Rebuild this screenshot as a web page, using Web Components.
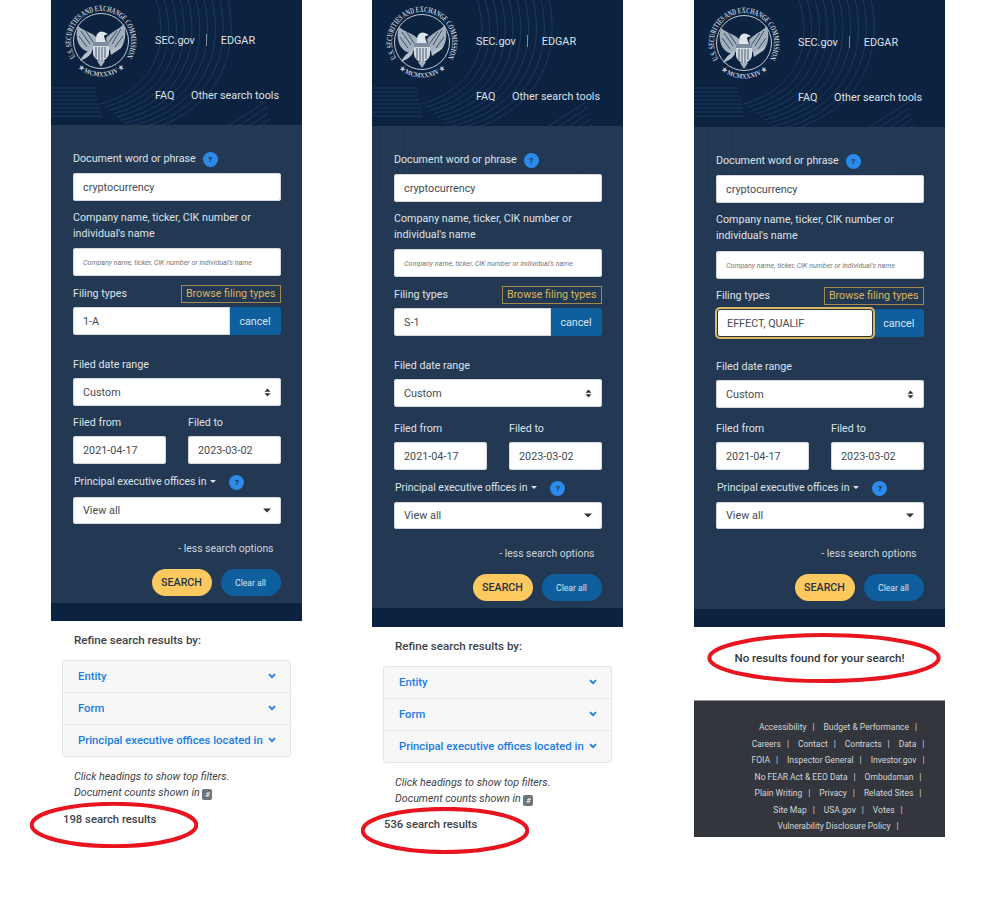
<!DOCTYPE html>
<html>
<head>
<meta charset="utf-8">
<title>EDGAR full text search</title>
<style>
    html, body { margin: 0; padding: 0; background: #fff; }
    body { font-family: Roboto, "Liberation Sans", sans-serif; }
</style>
</head>
<body>
<sec-page>
    <search-panel filing="1-A" style="--head:125px;--pad:1px;--form:478px;--gap-from:9px;--gap-co:6px;--gap-row:9px;--gap-sel:7px;--gap-btn:12px;--band:18px">
        <refine-box style="--top:10px;--gap-count:11px"></refine-box>
    </search-panel>
    <search-panel filing="S-1" style="--head:126px;--pad:2px;--form:482px;--gap-from:14px;--gap-co:6px;--gap-row:9px;--gap-sel:6px;--gap-btn:12px;--band:19px">
        <refine-box count="536" style="--top:10px;--gap-count:10px"></refine-box>
    </search-panel>
    <search-panel filing="EFFECT, QUALIF" focused style="margin-left:1px;--head:127px;--pad:3px;--form:482px;--gap-from:13px;--gap-co:7px;--gap-row:8px;--gap-sel:6px;--gap-btn:12px;--band:18px">
        <no-results></no-results>
        <sec-footer></sec-footer>
    </search-panel>
    <red-ring style="left:30px;top:802px;width:168px;height:46px"></red-ring>
    <red-ring style="left:361px;top:807px;width:168px;height:47px"></red-ring>
    <red-ring style="left:707px;top:633px;width:234px;height:50px"></red-ring>
</sec-page>

<script>
class SecPage extends HTMLElement {
    constructor() {
        super();
        this.attachShadow({ mode: 'open' });
        this.shadowRoot.innerHTML = `
            <style>
                :host {
                    display: flex;
                    position: relative;
                    gap: 70px;
                    padding-left: 51px;
                    height: 908px;
                    overflow: hidden;
                    background: #fff;
                }
            </style>
            <slot></slot>
        `;
    }
}

class SecSeal extends HTMLElement {
    constructor() {
        super();
        this.attachShadow({ mode: 'open' });
        // Text runs on circles, the bird is only a rough sketch
        this.shadowRoot.innerHTML = `
            <style>
                :host { display: block; width: 76px; height: 78px; }
                svg { display: block; }
                text { font-family: "Liberation Serif", serif; font-weight: 700; fill: #c3ccd6; }
            </style>
            <svg width="76" height="78" viewBox="0 0 76 78">
                <defs>
                    <path id="top" d="M12.600 55.900 A30 30 0 1 1 63.400 55.900"/>
                    <path id="bot" d="M10.800 62.800 A35.500 35.500 0 0 0 65.200 62.800"/>
                </defs>
                <circle cx="38" cy="40" r="27.500" fill="none" stroke="#c3ccd6" stroke-width="1"/>
                <text font-size="8.200"><textPath href="#top" textLength="127" lengthAdjust="spacingAndGlyphs">U.S. SECURITIES AND EXCHANGE COMMISSION</textPath></text>
                <text font-size="7"><textPath href="#bot" startOffset="6" textLength="50" lengthAdjust="spacingAndGlyphs">★ MCMXXXIV ★</textPath></text>
                <path d="M34 37C29 31 21 30 15 25C13 31 13 39 17 45C21 51 27 52 31 48Z" fill="#a3afbc"/>
                <path d="M43 37C48 31 55 29 61 23C63 31 63 39 59 45C55 51 49 52 45 48Z" fill="#a3afbc"/>
                <path d="M18 30L27 43M16 35L24 46M22 29L30 41M58 28L49 43M60 35L52 46M54 30L46 41" stroke="#2c4460" stroke-width=".9" fill="none"/>
                <path d="M33 38C33 32 37 29 41 31L45 33L41 34.500C41 36 42 38 43 41L33 41Z" fill="#dfe4e9"/>
                <path d="M30 41L46 41L46 52C46 57 41 59 38 62C35 59 30 57 30 52Z" fill="#d3d9e0"/>
                <path d="M30 41H46V45H30Z" fill="#7f8fa1"/>
                <path d="M33 46V57M36 46V60M39 46V60M42 46V57" stroke="#475c74" stroke-width="1"/>
                <path d="M29 51C25 57 21 58 17 60C19 55 23 51 28 48Z" fill="#b6c0ca"/>
                <path d="M47 50L60 43L58 47L48 54Z" fill="#b6c0ca"/>
                <path d="M34 60L38 66L42 60Z" fill="#a3afbc"/>
            </svg>
        `;
    }
}

class SecHelp extends HTMLElement {
    constructor() {
        super();
        this.attachShadow({ mode: 'open' });
        this.shadowRoot.innerHTML = `
            <style>
                :host {
                    display: inline-flex;
                    width: 15px;
                    height: 15px;
                    border-radius: 50%;
                    background: #2b8aea;
                    color: #17304f;
                    font-size: 8px;
                    font-weight: 700;
                    align-items: center;
                    justify-content: center;
                }
            </style>
            ?
        `;
    }
}

class SecField extends HTMLElement {
    constructor() {
        super();
        this.attachShadow({ mode: 'open' });
        const arrow = this.getAttribute('arrow');
        let icon = '';
        if (arrow === 'both') {
            icon = '<svg width="7" height="9" viewBox="0 0 7 9"><path d="M.5 3.700L3.500 .5L6.500 3.700ZM.5 5.300L3.500 8.500L6.500 5.300Z" fill="#333"/></svg>';
        } else if (arrow === 'down') {
            icon = '<svg width="8" height="5" viewBox="0 0 8 5"><path d="M0 .5H8L4 4.500Z" fill="#333"/></svg>';
        }
        this.shadowRoot.innerHTML = `
            <style>
                :host {
                    display: flex;
                    align-items: center;
                    justify-content: space-between;
                    box-sizing: border-box;
                    height: var(--h, 28px);
                    padding: 0 10px;
                    background: #fff;
                    border-radius: 3px;
                    box-shadow: inset 0 0 0 1px #d5d9de;
                    color: #444b52;
                    font-size: 10.8px;
                }
            </style>
            <span><slot></slot></span>${icon}
        `;
    }
}

class SearchPanel extends HTMLElement {
    constructor() {
        super();
        this.attachShadow({ mode: 'open' });
    }

    connectedCallback() {
        const filing = this.getAttribute('filing');
        const focused = this.hasAttribute('focused');

        // Faint eagle behind the header and the top of the form
        let feathers = '';
        for (let i = 0; i < 10; i++) {
            const d = i * 8;
            feathers += `<path d="M${104 + d} -4C${120 + d} ${44 + d * .2} ${104 + d * .8} ${88 + d * .4} ${50 + d * .5} ${104 + d * .4}"/>`;
            feathers += `<path d="M${214 + d * .2} ${102 + d * .7}L${140 + d * .6} ${150 + d * .5}"/>`;
        }
        for (let i = 0; i < 8; i++) {
            feathers += `<path d="M0 ${88 + i * 4}H${44 + i}"/>`;
            feathers += `<path d="M${5 + i * 6} 128V192"/>`;
        }

        this.shadowRoot.innerHTML = `
            <style>
                :host {
                    display: block;
                    position: relative;
                    flex: none;
                    width: 251px;
                    font-size: 10.7px;
                    color: #dfe3e8;
                }
                .mark {
                    position: absolute;
                    left: 0;
                    top: 0;
                }
                .mark path { fill: none; stroke: #1c3a5e; stroke-width: 1; }
                .top {
                    position: relative;
                    background: #0b2240;
                    padding-bottom: var(--band);
                }
                header {
                    position: relative;
                    box-sizing: border-box;
                    height: var(--head);
                    display: grid;
                    grid-template-columns: 92px 1fr;
                    padding: var(--pad) 23px 0 12px;
                }
                nav {
                    display: flex;
                    flex-direction: column;
                    gap: 39px;
                    padding-top: 31px;
                    font-size: 10.8px;
                }
                nav div { display: flex; height: 16px; align-items: center; }
                nav .two { justify-content: space-between; }
                nav i { width: 1px; height: 12px; background: #7c8b9d; margin: 0 14px 0 11px; }
                .form {
                    position: relative;
                    box-sizing: border-box;
                    height: var(--form);
                    padding: 26px 21.500px 0 22px;
                    background: rgba(41, 63, 87, .8);
                }
                label, .label { display: block; line-height: 16px; }
                .gap6 { margin-top: 6px; }
                .gap5 { margin-top: 5px; }
                .row { display: flex; align-items: center; justify-content: space-between; }
                .docrow { justify-content: flex-start; gap: 7px; }
                .browse {
                    box-sizing: border-box;
                    height: 18px;
                    line-height: 16px;
                    padding: 0 4px;
                    border: 1px solid #a38b47;
                    color: #d9b65c;
                }
                .filing { display: flex; margin-top: 4px; --h: 28px; }
                .filing sec-field { flex: 1; border-radius: 3px 0 0 3px; }
                .cancel {
                    width: 51px;
                    display: flex;
                    align-items: center;
                    justify-content: center;
                    background: #0f5f9f;
                    color: #d8e3ee;
                    border-radius: 0 3px 3px 0;
                }
                .focus sec-field {
                    flex: none;
                    width: 156px;
                    margin: 0 1px;
                    border-radius: 3px;
                    position: relative;
                    box-shadow: inset 0 0 0 1px #333, 0 0 0 2px #d8b865;
                }
                .focus .cancel { width: 49.500px; border-radius: 3px; }
                .dates { display: grid; grid-template-columns: 92.500px 92.500px; justify-content: space-between; margin-top: var(--gap-from); }
                .po { gap: 13px; justify-content: flex-start; margin-top: 10px; padding-left: 1px; font-size: 10.5px; }
                .caret { display: inline-block; margin-left: 4px; vertical-align: 2px; border: 3.500px solid transparent; border-top-color: #dfe3e8; border-bottom: 0; }
                .less { text-align: right; padding-right: 7px; line-height: 16px; margin-top: 17px; color: #cfd5dc; font-size: 10.4px; }
                .btns { display: flex; justify-content: flex-end; gap: 9px; margin-top: var(--gap-btn); }
                .btn {
                    height: 27px;
                    display: flex;
                    align-items: center;
                    justify-content: center;
                    border-radius: 14px;
                }
                .search { width: 60px; background: #fdc95f; color: #243447; font-weight: 500; }
                .clear { width: 60px; background: #0f5f9f; color: #d8e3ee; font-size: 8.6px; }
            </style>
            <div class="top">
                <svg class="mark" width="251" height="230" viewBox="0 0 251 230">${feathers}</svg>
                <header>
                    <sec-seal></sec-seal>
                    <nav>
                        <div><span>SEC.gov</span><i></i><span>EDGAR</span></div>
                        <div class="two"><span>FAQ</span><span>Other search tools</span></div>
                    </nav>
                </header>
                <div class="form">
                    <div class="row docrow"><span class="label">Document word or phrase</span><sec-help></sec-help></div>
                    <sec-field class="gap6">cryptocurrency</sec-field>
                    <label style="margin-top:9px">Company name, ticker, CIK number or<br>individual's name</label>
                    <sec-field style="margin-top:var(--gap-co);font-size:7.100px;font-style:italic;color:#777">Company name, ticker, CIK number or individual's name</sec-field>
                    <div class="row" style="margin-top:var(--gap-row)"><span class="label">Filing types</span><span class="browse">Browse filing types</span></div>
                    <div class="filing ${focused ? 'focus' : ''}">
                        <sec-field>${filing}</sec-field>
                        <div class="cancel">cancel</div>
                    </div>
                    <label style="margin-top:22px">Filed date range</label>
                    <sec-field class="gap5" arrow="both">Custom</sec-field>
                    <div class="dates">
                        <label>Filed from</label><label>Filed to</label>
                        <sec-field class="gap5">2021-04-17</sec-field><sec-field class="gap5">2023-03-02</sec-field>
                    </div>
                    <div class="row po"><span class="label">Principal executive offices in<span class="caret"></span></span><sec-help></sec-help></div>
                    <sec-field arrow="down" style="--h:27px;margin-top:var(--gap-sel)">View all</sec-field>
                    <div class="less">- less search options</div>
                    <div class="btns">
                        <div class="btn search">SEARCH</div>
                        <div class="btn clear">Clear all</div>
                    </div>
                </div>
            </div>
            <slot></slot>
        `;
    }
}

class RefineBox extends HTMLElement {
    constructor() {
        super();
        this.attachShadow({ mode: 'open' });
    }

    connectedCallback() {
        const count = this.getAttribute('count') || '198';
        const rows = ['Entity', 'Form', 'Principal executive offices located in'].map((name) => `
            <div class="item"><span>${name}</span>
                <svg width="8" height="6" viewBox="0 0 8 6"><path d="M1 1.200L4 4.200L7 1.200" fill="none" stroke="#1a7de0" stroke-width="1.800"/></svg>
            </div>
        `).join('');

        this.shadowRoot.innerHTML = `
            <style>
                :host { display: block; padding-top: var(--top); font-size: 11.3px; color: #3c4248; }
                .title { padding-left: 23px; font-weight: 500; line-height: 18px; font-size: 11.600px; }
                .acc {
                    margin: 11px 11px 0;
                    border: 1px solid #e4e5e7;
                    border-radius: 3px;
                    background: #f7f7f7;
                }
                .item {
                    display: flex;
                    align-items: center;
                    justify-content: space-between;
                    box-sizing: border-box;
                    height: 31px;
                    padding: 0 14px 0 15px;
                    color: #1a7de0;
                    font-weight: 500;
                }
                .item svg { margin-bottom: 2px; }
                .item + .item { border-top: 1px solid #e8e8e9; height: 32px; }
                .hint { margin: 12px 0 0 23px; font-style: italic; line-height: 16px; font-size: 10.700px; }
                .num {
                    display: inline-block;
                    width: 10px;
                    height: 11px;
                    line-height: 11px;
                    text-align: center;
                    font-size: 8px;
                    color: #fff;
                    background: #6c757d;
                    border-radius: 2px;
                    vertical-align: -1px;
                }
                .count { margin: var(--gap-count) 0 0 12px; font-weight: 500; line-height: 16px; }
            </style>
            <div class="title">Refine search results by:</div>
            <div class="acc">${rows}</div>
            <div class="hint">Click headings to show top filters.<br>Document counts shown in <span class="num">#</span></div>
            <div class="count">${count} search results</div>
        `;
    }
}

class NoResults extends HTMLElement {
    constructor() {
        super();
        this.attachShadow({ mode: 'open' });
        this.shadowRoot.innerHTML = `
            <style>
                :host {
                    display: block;
                    height: 73px;
                    padding-top: 22px;
                    box-sizing: border-box;
                    text-align: center;
                    font-size: 11.600px;
                    font-weight: 500;
                    line-height: 18px;
                    color: #33383e;
                }
            </style>
            No results found for your search!
        `;
    }
}

class SecFooter extends HTMLElement {
    constructor() {
        super();
        this.attachShadow({ mode: 'open' });
        const lines = [
            ['Accessibility', 'Budget & Performance'],
            ['Careers', 'Contact', 'Contracts', 'Data'],
            ['FOIA', 'Inspector General', 'Investor.gov'],
            ['No FEAR Act & EEO Data', 'Ombudsman'],
            ['Plain Writing', 'Privacy', 'Related Sites'],
            ['Site Map', 'USA.gov', 'Votes'],
            ['Vulnerability Disclosure Policy']
        ];
        const html = lines.map((line) => '<div>' + line.map((t) => `<span>${t.replace('&', '&amp;')}</span><b>|</b>`).join('') + '</div>').join('');
        this.shadowRoot.innerHTML = `
            <style>
                :host {
                    display: block;
                    box-sizing: border-box;
                    height: 137px;
                    padding: 18px 4px 0 41px;
                    background: #33373d;
                    border-top: 1px solid #8a8d91;
                    color: #d4d6d9;
                    font-size: 8.500px;
                }
                div { display: flex; justify-content: center; height: 16.500px; align-items: center; }
                b { font-weight: 400; margin: 0 9px 0 6px; }
                div b:last-child { margin-right: 0; }
            </style>
            ${html}
        `;
    }
}

class RedRing extends HTMLElement {
    constructor() {
        super();
        this.attachShadow({ mode: 'open' });
        this.shadowRoot.innerHTML = `
            <style>
                :host { display: block; position: absolute; }
                svg { display: block; width: 100%; height: 100%; }
            </style>
            <svg viewBox="0 0 100 100" preserveAspectRatio="none">
                <ellipse cx="50" cy="50" rx="49" ry="46" fill="none" stroke="#e8141f" stroke-width="4" vector-effect="non-scaling-stroke"/>
            </svg>
        `;
    }
}

customElements.define('sec-page', SecPage);
customElements.define('sec-seal', SecSeal);
customElements.define('sec-help', SecHelp);
customElements.define('sec-field', SecField);
customElements.define('search-panel', SearchPanel);
customElements.define('refine-box', RefineBox);
customElements.define('no-results', NoResults);
customElements.define('sec-footer', SecFooter);
customElements.define('red-ring', RedRing);
</script>
</body>
</html>
